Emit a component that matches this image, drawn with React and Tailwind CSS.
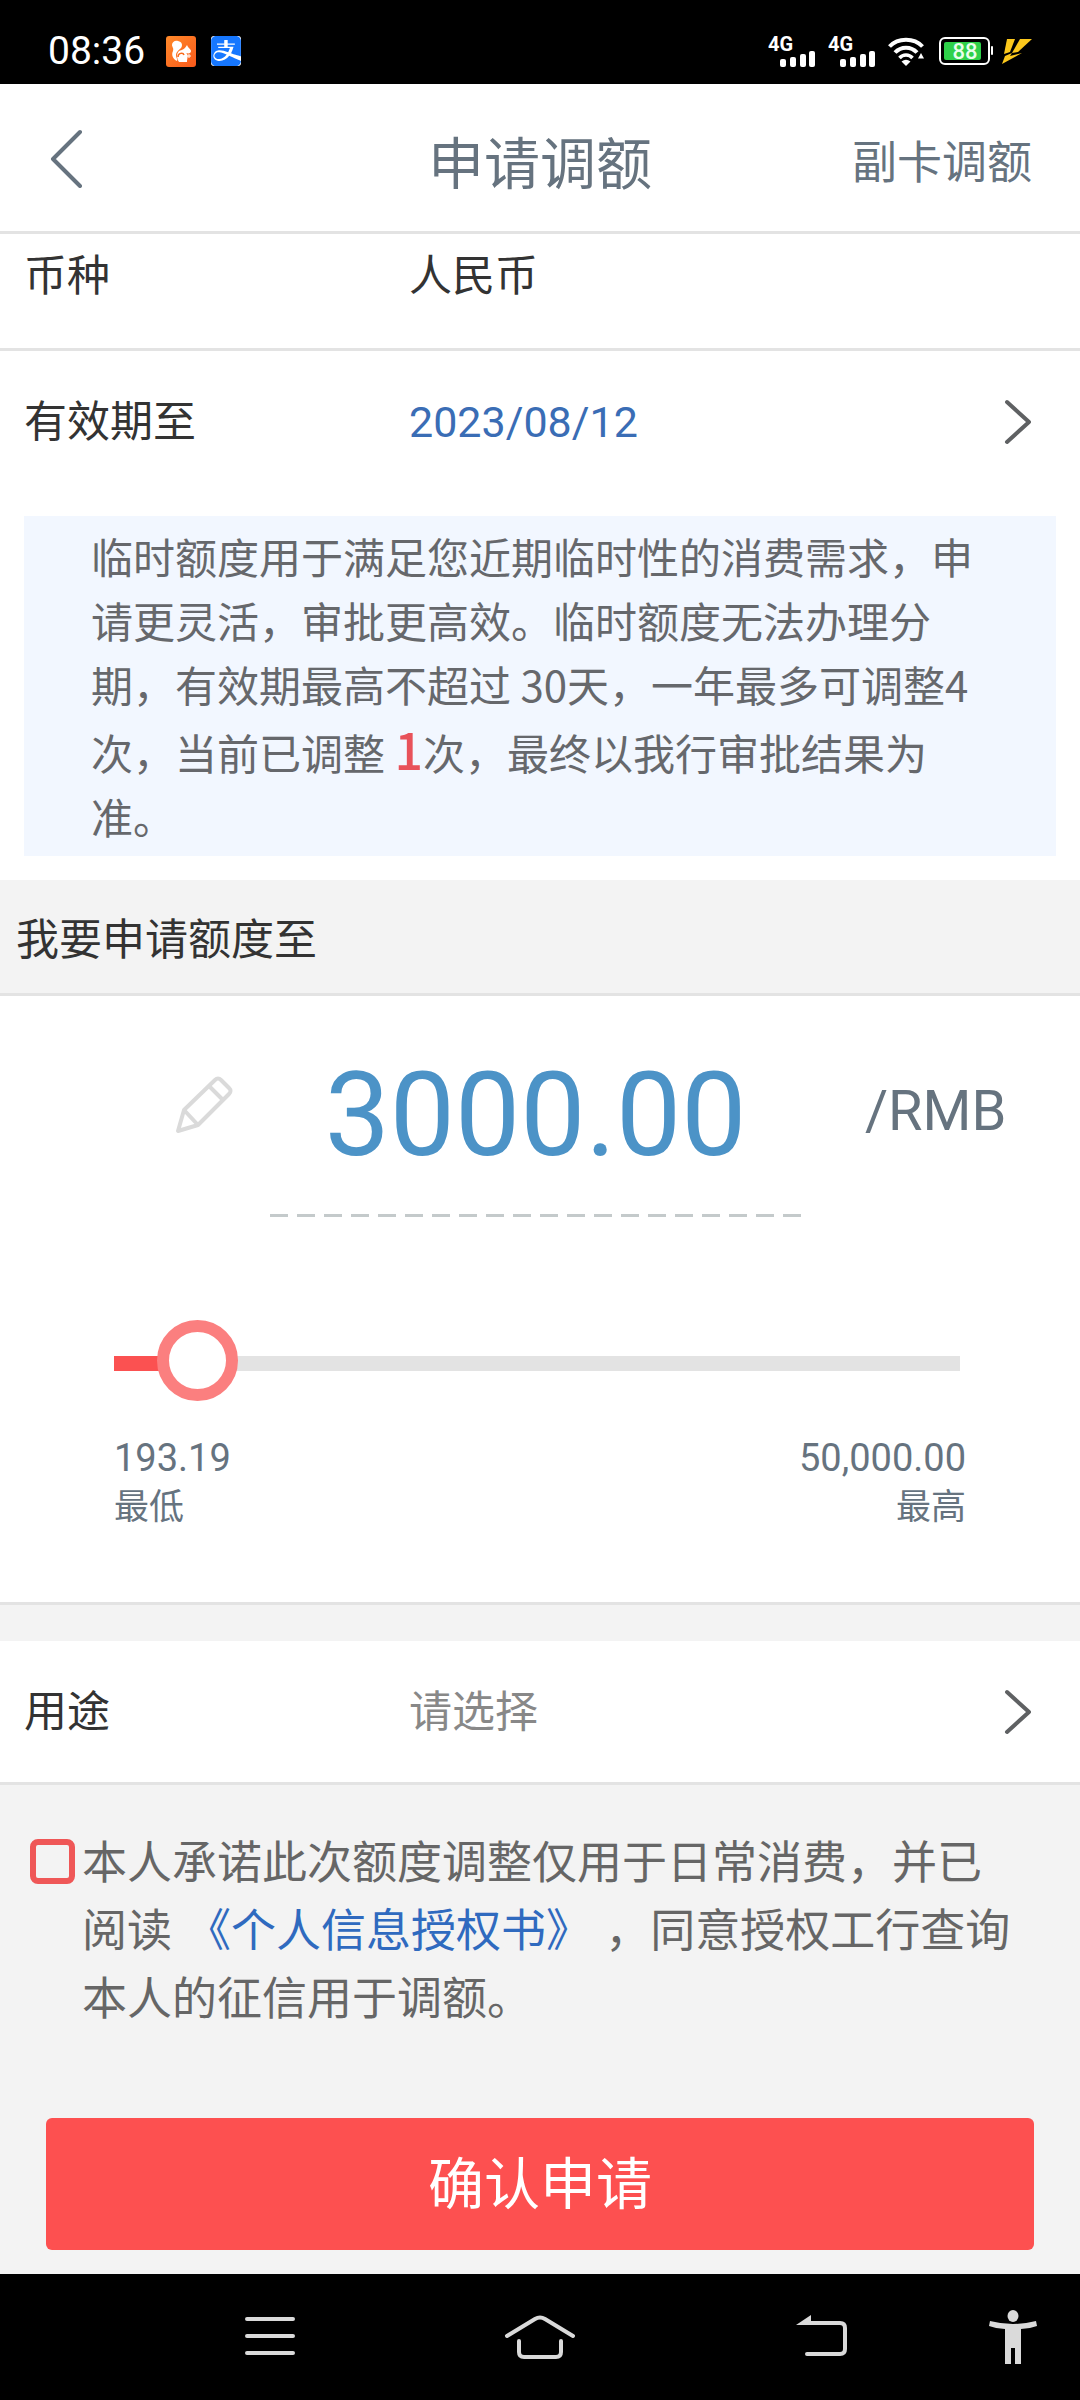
import { useState } from "react";
import { SiAlipay } from "react-icons/si";

const MIN = 193.19;
const MAX = 50000;

function SignalIcon() {
  return (
    <svg width="48" height="43" viewBox="0 -6 48 43" fill="#fff">
      <text x="0" y="15" fontFamily="Roboto, sans-serif" fontSize="20" fontWeight="700">4G</text>
      <rect x="12" y="23" width="6" height="8" rx="2" />
      <rect x="22" y="21" width="6" height="10" rx="2" />
      <rect x="32" y="18" width="6" height="13" rx="2" />
      <rect x="41" y="15" width="6" height="16" rx="2" />
    </svg>
  );
}

function WifiIcon() {
  return (
    <svg width="36" height="31" viewBox="0 0 36 31" fill="none" stroke="#fff" strokeWidth="4">
      <path d="M1.500 10.500C10 1.500 26 1.500 34.500 10.500" />
      <path d="M7 16.500C13 10 23 10 29 16.500" />
      <path d="M11.500 22C15 18 21 18 24.500 22" strokeWidth="3.500" />
      <path d="M18 30L13.500 25.500Q18 22 22.500 25.500Z" fill="#fff" stroke="none" />
      <path d="M33 17L36 22.500H30Z" fill="#fff" stroke="none" />
    </svg>
  );
}

function BatteryIcon() {
  return (
    <svg width="54" height="28" viewBox="0 0 54 28">
      <rect x="1" y="1" width="49" height="26" rx="5" fill="none" stroke="#fff" strokeWidth="2" />
      <rect x="5" y="5" width="37" height="18" rx="2" fill="#2fd14a" />
      <rect x="52" y="9" width="2" height="9" rx="1" fill="#fff" />
      <text x="26" y="22" textAnchor="middle" fontFamily="Roboto, sans-serif" fontSize="22" fontWeight="500" fill="#e9ffec">88</text>
    </svg>
  );
}

function ChargeIcon() {
  return (
    <svg width="30" height="25" viewBox="0 0 30 25" fill="#fcc81c">
      <path d="M5 0H13L8 13L2 15Z" />
      <path d="M18 0H30L16 13L10 14Z" />
      <path d="M0 25L3 17L10 14L8 17L20 14Z" />
    </svg>
  );
}

function BrowserIcon() {
  return (
    <svg width="30" height="31" viewBox="0 0 30 31">
      <defs>
        <linearGradient id="browserBg" x1="0" y1="0" x2="1" y2="1">
          <stop offset="0" stopColor="#ff8a2a" />
          <stop offset="1" stopColor="#f9591b" />
        </linearGradient>
      </defs>
      <rect width="30" height="31" rx="3" fill="url(#browserBg)" />
      <path d="M6 9C6 6 9 4 12 5C16 6 17 9 15 12C13 14 10 16 10 19C10 22 12 23 11 25C7 23 5 19 7 15C8 12 6 11 6 9Z" fill="#fff" />
      <path d="M13 15C16 14 19 13 21 9C22 12 25 13 25 15C25 17 23 18 20 17C23 19 21 22 21 26H13C11 23 10 18 13 15Z" fill="#fff" />
      <path d="M12 21C12 17 17 16 18 19" fill="none" stroke="#f96a1b" strokeWidth="1.500" />
      <path d="M23 18V22M21 20H25" stroke="#fff" strokeWidth="1" />
    </svg>
  );
}

function ChevronRight() {
  return (
    <svg width="28" height="46" viewBox="0 0 28 46" fill="none" stroke="#5f6163" strokeWidth="4" strokeLinecap="round" strokeLinejoin="round">
      <path d="M3 3L25 23L3 43" />
    </svg>
  );
}

function PencilIcon() {
  return (
    <svg width="58" height="58" viewBox="0 0 58 58" fill="none" stroke="#dadada" strokeWidth="4" strokeLinejoin="round">
      <path d="M3 55L9 34L40 4Q43 1 46 4L54 12Q57 15 54 18L23 49Z" />
      <path d="M34 10L48 24M9 34L23 49" />
    </svg>
  );
}

function StatusBar() {
  return (
    <div className="h-[84px] bg-black flex items-center justify-between pl-12 pr-12 pt-[18px]">
      <div className="flex items-center">
        <span className="text-white font-[Roboto,sans-serif] text-[39px] leading-[48px] w-[118px]">08:36</span>
        <BrowserIcon />
        <span className="ml-[15px] bg-white rounded-[3px] overflow-hidden">
          <SiAlipay size={30} color="#1677ff" className="block" />
        </span>
      </div>
      <div className="flex items-center">
        <div className="flex items-center gap-3 mr-[15px]">
          <SignalIcon />
          <SignalIcon />
          <WifiIcon />
        </div>
        <div className="flex items-center gap-[9px]">
          <BatteryIcon />
          <ChargeIcon />
        </div>
      </div>
    </div>
  );
}

function Header() {
  return (
    <header className="h-[150px] bg-white border-b-3 border-[#e3e3e3] grid grid-cols-[1fr_auto_1fr] items-center text-[#66737f]">
      <button type="button" aria-label="返回" className="justify-self-start pl-[49px]">
        <svg width="36" height="60" viewBox="0 0 36 60" fill="none" stroke="#66737f" strokeWidth="4" strokeLinecap="round" strokeLinejoin="round">
          <path d="M31 4L4 31L31 58" />
        </svg>
      </button>
      <h1 className="text-[56px] leading-[80px] pt-1">申请调额</h1>
      <a href="#sub-card" className="justify-self-end pr-12 text-[45px] leading-[68px] pt-1">副卡调额</a>
    </header>
  );
}

function NavBar() {
  return (
    <nav className="h-[126px] bg-black flex items-center">
      <div className="w-1/8" />
      <button type="button" aria-label="菜单" className="flex-1 flex justify-center">
        <svg width="52" height="46" viewBox="0 0 52 46" stroke="#dadada" strokeWidth="4" strokeLinecap="round">
          <path d="M3 5H49M3 22H49M3 39H49" />
        </svg>
      </button>
      <button type="button" aria-label="主页" className="flex-1 flex justify-center">
        <svg width="72" height="46" viewBox="0 0 72 46" fill="none" stroke="#dadada" strokeWidth="4" strokeLinecap="round">
          <path d="M3 22L31 5Q36 2 41 5L69 22" />
          <path d="M15 27V38Q15 43 20 43H52Q57 43 57 38V27" />
        </svg>
      </button>
      <button type="button" aria-label="返回" className="flex-1 flex justify-center">
        <svg width="52" height="46" viewBox="0 0 52 46" fill="none" stroke="#dadada" strokeWidth="4" strokeLinecap="round" className="ml-6">
          <path d="M8 9H44Q49 9 49 14V35Q49 40 44 40H11" />
          <path d="M0 11L15 1V11Z" fill="#dadada" stroke="none" />
        </svg>
      </button>
      <button type="button" aria-label="无障碍" className="w-1/8 flex justify-center">
        <svg width="48" height="54" viewBox="0 0 48 54" fill="#dadada">
          <ellipse cx="24" cy="6" rx="5.500" ry="6" />
          <path d="M1 11Q24 17 47 11L48 16Q40 19 32 19V54H26V38H22V54H16V19Q8 19 0 16Z" />
        </svg>
      </button>
    </nav>
  );
}

export default function App() {
  const [amount, setAmount] = useState("3000.00");
  const [purpose, setPurpose] = useState("");
  const [agreed, setAgreed] = useState(false);

  const value = parseFloat(amount) || MIN;
  const percent = ((value - MIN) / (MAX - MIN)) * 100;

  return (
    <div className="min-h-screen flex flex-col bg-[#f3f3f3] text-[43px] text-[#333] font-['Noto_Sans_CJK_SC','Liberation_Sans',sans-serif]">
      <StatusBar />
      <Header />

      <main className="flex-1">
        <section className="bg-white pb-6">
          <div className="h-[117px] border-b-3 border-[#e3e3e3] flex items-start pl-6 pt-[6px] leading-[64px]">
            <span className="w-[385px]">币种</span>
            <span>人民币</span>
          </div>
          <div className="h-[141px] flex items-center pl-6 pr-12 leading-[64px]">
            <span className="w-[385px] pb-2">有效期至</span>
            <button type="button" aria-label="有效期至" className="flex-1 flex items-center justify-between font-[Roboto,sans-serif] text-[#3a6db5]">
              2023/08/12
              <ChevronRight />
            </button>
          </div>

          {/* 临时额度说明 */}
          <p className="mx-6 mt-6 bg-[#f2f7ff] px-[67px] py-2 text-[42px] leading-[64px] text-[#66686c]">
            临时额度用于满足您近期临时性的消费需求，申请更灵活，审批更高效。临时额度无法办理分期，有效期最高不超过 30天，一年最多可调整4次，当前已调整 <span className="text-[50px] font-medium text-[#e8525a]">1</span>次，最终以我行审批结果为准。
          </p>
        </section>

        <h2 className="h-[116px] border-b-3 border-[#e3e3e3] pl-4 leading-[112px]">我要申请额度至</h2>

        {/* 额度输入 */}
        <section className="bg-white border-b-3 border-[#e3e3e3] text-[#66737f]">
          <div className="h-[218px] flex items-center font-[Roboto,sans-serif]">
            <button type="button" aria-label="编辑额度" className="w-1/4 flex justify-end pr-[37px]">
              <PencilIcon />
            </button>
            <input
              type="text"
              aria-label="申请额度"
              value={amount}
              onChange={(e) => setAmount(e.target.value)}
              className="flex-1 min-w-0 pt-5 text-center text-[116px] leading-[136px] text-[#4c93c7] bg-transparent outline-none"
            />
            <span className="w-[279px] pl-16 pt-3 text-[56px] leading-[64px]">/RMB</span>
          </div>
          <div className="ml-[25%] mr-[279px] h-[3px] bg-[repeating-linear-gradient(to_right,#c4cacb_0_18px,transparent_18px_27px)]" />

          <div className="mx-[114px] mt-[106px] pb-[75px]">
            <div className="pr-[6px]">
              <input
                type="range"
                aria-label="额度滑块"
                min={MIN}
                max={MAX}
                step="any"
                value={value}
                onChange={(e) => setAmount(Number(e.target.value).toFixed(2))}
                style={{ "--fill": `${percent}%` }}
                className="block w-full h-[81px] appearance-none bg-transparent [&::-webkit-slider-runnable-track]:h-[15px] [&::-webkit-slider-runnable-track]:bg-[linear-gradient(to_right,#fb5151_var(--fill),#e3e3e3_var(--fill))] [&::-webkit-slider-thumb]:appearance-none [&::-webkit-slider-thumb]:size-[81px] [&::-webkit-slider-thumb]:-mt-9 [&::-webkit-slider-thumb]:rounded-full [&::-webkit-slider-thumb]:border-12 [&::-webkit-slider-thumb]:border-solid [&::-webkit-slider-thumb]:border-[#fb7f7f] [&::-webkit-slider-thumb]:bg-white"
              />
            </div>
            <div className="mt-[31px] flex justify-between text-[35px] leading-[46px]">
              <div>
                <div className="font-[Roboto,sans-serif] text-[38px]">193.19</div>
                <div>最低</div>
              </div>
              <div className="text-right">
                <div className="font-[Roboto,sans-serif] text-[38px]">50,000.00</div>
                <div>最高</div>
              </div>
            </div>
          </div>
        </section>

        <section className="mt-9 h-[144px] bg-white border-b-3 border-[#e3e3e3] flex items-center pl-6 pr-12 leading-[64px]">
          <label htmlFor="purpose" className="w-[385px] pb-2">用途</label>
          <select
            id="purpose"
            value={purpose}
            onChange={(e) => setPurpose(e.target.value)}
            className="flex-1 pb-2 appearance-none bg-transparent text-[#888] outline-none"
          >
            <option value="">请选择</option>
          </select>
          <ChevronRight />
        </section>

        <section className="flex flex-col pt-[41px] pb-6">
          <div className="flex items-start gap-[7px] pl-[30px] pr-[60px]">
            <input
              id="agree"
              type="checkbox"
              checked={agreed}
              onChange={(e) => setAgreed(e.target.checked)}
              className="shrink-0 mt-[13px] size-[45px] appearance-none rounded-lg border-6 border-[#ef5757] checked:bg-[#ef5757]"
            />
            <label htmlFor="agree" className="text-[45px] leading-[68px] text-[#666]">
              本人承诺此次额度调整仅用于日常消费，并已阅读 <a href="#authorization" className="mx-1 text-[#2f6abf]">《个人信息授权书》</a> ，同意授权工行查询本人的征信用于调额。
            </label>
          </div>
          <button type="button" className="mx-[46px] mt-[88px] h-[132px] pb-2 rounded-md bg-[#fd5050] text-white text-[56px] leading-[80px]">
            确认申请
          </button>
        </section>
      </main>

      <NavBar />
    </div>
  );
}
